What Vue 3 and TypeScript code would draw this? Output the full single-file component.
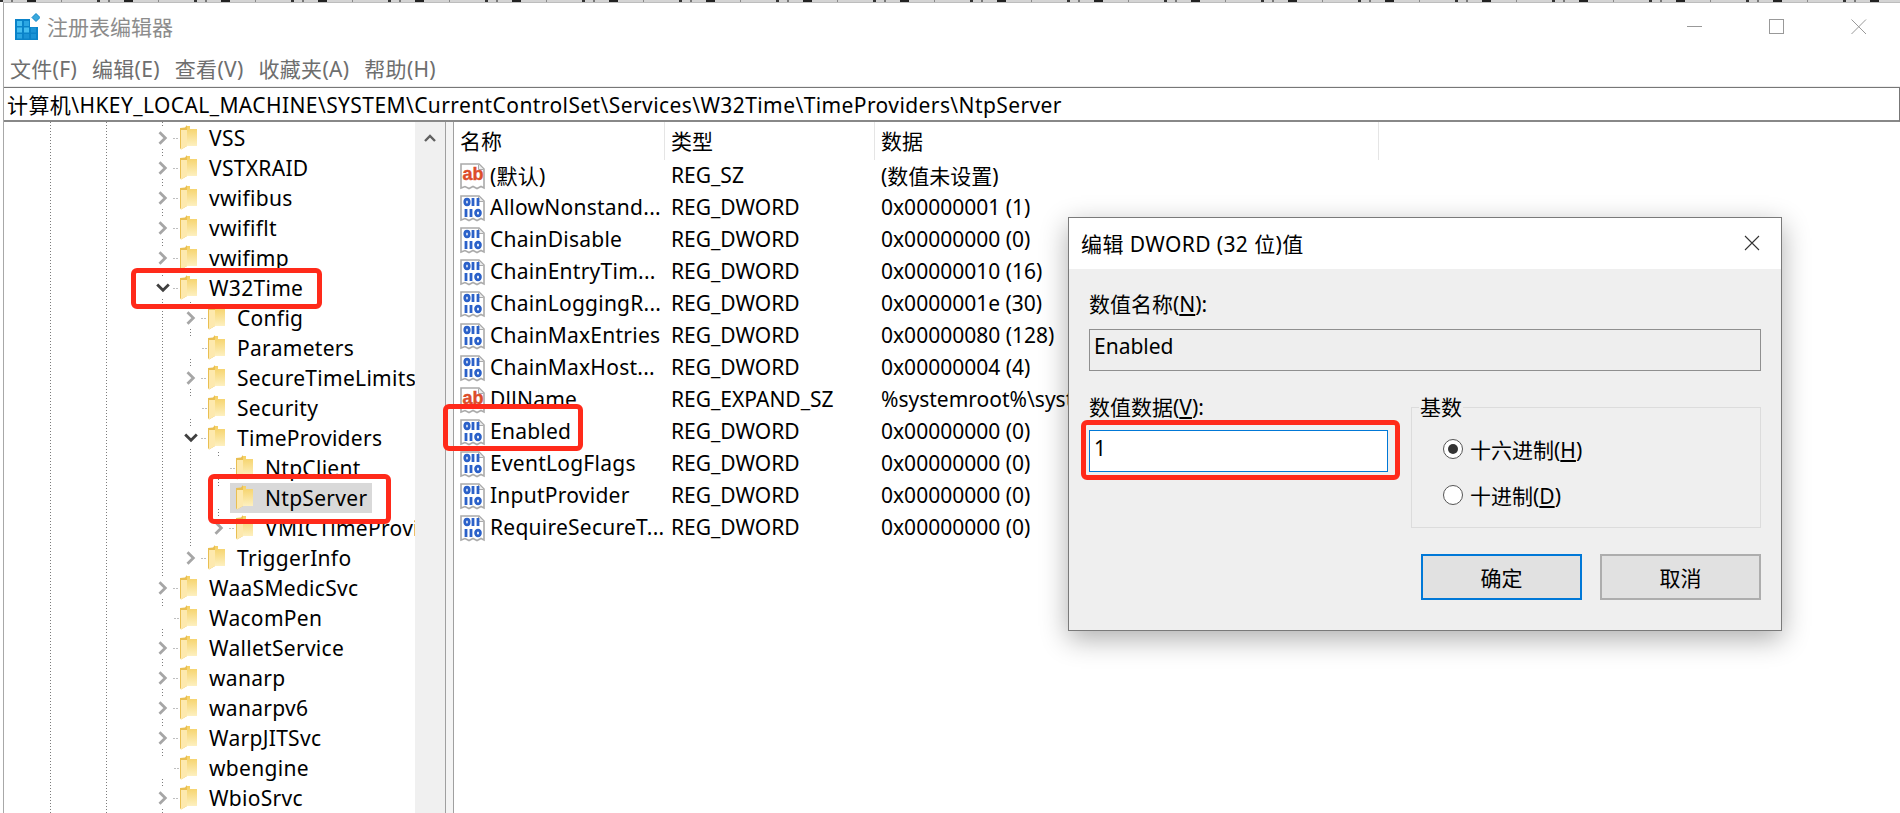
<script setup lang="ts">
type Exp = 'closed' | 'open' | 'none'
interface TreeRow { name: string; level: number; exp: Exp; sel?: boolean }
interface Mark { left: number; top: number; width: number; height: number }

const rowH = 30
const treeRows: TreeRow[] = [
  { name: 'VSS', level: 0, exp: 'closed' },
  { name: 'VSTXRAID', level: 0, exp: 'closed' },
  { name: 'vwifibus', level: 0, exp: 'closed' },
  { name: 'vwififlt', level: 0, exp: 'closed' },
  { name: 'vwifimp', level: 0, exp: 'closed' },
  { name: 'W32Time', level: 0, exp: 'open' },
  { name: 'Config', level: 1, exp: 'closed' },
  { name: 'Parameters', level: 1, exp: 'none' },
  { name: 'SecureTimeLimits', level: 1, exp: 'closed' },
  { name: 'Security', level: 1, exp: 'none' },
  { name: 'TimeProviders', level: 1, exp: 'open' },
  { name: 'NtpClient', level: 2, exp: 'none' },
  { name: 'NtpServer', level: 2, exp: 'none', sel: true },
  { name: 'VMICTimeProvider', level: 2, exp: 'closed' },
  { name: 'TriggerInfo', level: 1, exp: 'closed' },
  { name: 'WaaSMedicSvc', level: 0, exp: 'closed' },
  { name: 'WacomPen', level: 0, exp: 'none' },
  { name: 'WalletService', level: 0, exp: 'closed' },
  { name: 'wanarp', level: 0, exp: 'closed' },
  { name: 'wanarpv6', level: 0, exp: 'closed' },
  { name: 'WarpJITSvc', level: 0, exp: 'closed' },
  { name: 'wbengine', level: 0, exp: 'none' },
  { name: 'WbioSrvc', level: 0, exp: 'closed' },
]

const values = [
  { kind: 'ab', name: '(默认)', type: 'REG_SZ', data: '(数值未设置)' },
  { kind: 'bin', name: 'AllowNonstand...', type: 'REG_DWORD', data: '0x00000001 (1)' },
  { kind: 'bin', name: 'ChainDisable', type: 'REG_DWORD', data: '0x00000000 (0)' },
  { kind: 'bin', name: 'ChainEntryTim...', type: 'REG_DWORD', data: '0x00000010 (16)' },
  { kind: 'bin', name: 'ChainLoggingR...', type: 'REG_DWORD', data: '0x0000001e (30)' },
  { kind: 'bin', name: 'ChainMaxEntries', type: 'REG_DWORD', data: '0x00000080 (128)' },
  { kind: 'bin', name: 'ChainMaxHost...', type: 'REG_DWORD', data: '0x00000004 (4)' },
  { kind: 'ab', name: 'DllName', type: 'REG_EXPAND_SZ', data: '%systemroot%\\system32\\w32time.dll' },
  { kind: 'bin', name: 'Enabled', type: 'REG_DWORD', data: '0x00000000 (0)' },
  { kind: 'bin', name: 'EventLogFlags', type: 'REG_DWORD', data: '0x00000000 (0)' },
  { kind: 'bin', name: 'InputProvider', type: 'REG_DWORD', data: '0x00000000 (0)' },
  { kind: 'bin', name: 'RequireSecureT...', type: 'REG_DWORD', data: '0x00000000 (0)' },
]

const menus = ['文件(F)', '编辑(E)', '查看(V)', '收藏夹(A)', '帮助(H)']

const marks: Mark[] = [
  { left: 131, top: 268, width: 191, height: 41 },
  { left: 208, top: 474, width: 183, height: 50 },
  { left: 443, top: 404, width: 140, height: 47 },
  { left: 1081, top: 420, width: 319, height: 60 },
]

const guideVertical = [
  { x: 46.5, y1: 0, y2: 700 },
  { x: 102.5, y1: 0, y2: 700 },
  { x: 158.5, y1: 0, y2: 700 },
  { x: 186.5, y1: 180, y2: 425 },
  { x: 214.5, y1: 330, y2: 405 },
]

const guideStubs = treeRows.map((r, i) => {
  const x = 158.5 + 28 * r.level
  const y = i * rowH + 16.5
  return { x1: r.exp === 'none' ? x : x + 11, x2: x + 16, y }
})

function rowIndent(level: number): string {
  return `${149 + 28 * level}px`
}
</script>

<template>
  <div class="page">
    <div class="strip"></div>
    <div class="window">
      <header class="titlebar">
        <svg class="app-icon" width="25" height="27" viewBox="0 0 25 27">
          <rect x="0" y="6" width="23" height="21" fill="#0a83c9" />
          <rect x="2" y="8" width="5" height="5" fill="#45bdf0" />
          <rect x="9" y="8" width="5" height="5" fill="#2aa5e2" />
          <rect x="2" y="14.5" width="5" height="5" fill="#45bdf0" />
          <rect x="9" y="14.5" width="5" height="5" fill="#45bdf0" />
          <rect x="16" y="14.5" width="5" height="5" fill="#1a93d6" />
          <rect x="2" y="21" width="5" height="4.5" fill="#2aa5e2" />
          <rect x="9" y="21" width="5" height="4.5" fill="#1a93d6" />
          <rect x="16" y="21" width="5" height="4.5" fill="#1a93d6" />
          <rect x="15" y="6" width="8" height="8" fill="#fff" />
          <path d="M21 .5l4 4-4 4-4-4z" fill="#3aa9dc" stroke="#0a83c9" stroke-width="1" />
        </svg>
        <span class="title-text">注册表编辑器</span>
        <div class="controls">
          <svg width="16" height="16" viewBox="0 0 16 16"><path d="M0 7.5h15" stroke="#999" fill="none" /></svg>
          <svg width="16" height="16" viewBox="0 0 16 16"><rect x=".5" y=".5" width="14" height="14" stroke="#999" fill="none" /></svg>
          <svg width="16" height="16" viewBox="0 0 16 16"><path d="M.5.5l14.5 14.5M15 .5L.5 15" stroke="#999" fill="none" /></svg>
        </div>
      </header>
      <nav class="menu">
        <span v-for="m in menus" :key="m">{{ m }}</span>
      </nav>
      <div class="address">计算机\HKEY_LOCAL_MACHINE\SYSTEM\CurrentControlSet\Services\W32Time\TimeProviders\NtpServer</div>
      <main class="main">
        <section class="tree">
          <div class="tree-scroll">
            <svg class="guides" width="411" height="700">
              <line v-for="g in guideVertical" :key="g.x" :x1="g.x" :x2="g.x" :y1="g.y1" :y2="g.y2" />
              <line v-for="(s, i) in guideStubs" :key="i" :x1="s.x1" :x2="s.x2" :y1="s.y" :y2="s.y" />
            </svg>
            <div v-for="r in treeRows" :key="r.name" class="row" :style="{ paddingLeft: rowIndent(r.level) }">
              <span class="expander">
                <svg v-if="r.exp === 'closed'" width="10" height="14" viewBox="0 0 10 14"><path d="M1.5 1.2l5.8 5.8-5.8 5.8" fill="none" stroke="#a6a6a6" stroke-width="2.8" /></svg>
                <svg v-else-if="r.exp === 'open'" width="14" height="10" viewBox="0 0 14 10"><path d="M1.2 1.5l5.8 5.8 5.8-5.8" fill="none" stroke="#404040" stroke-width="2.8" /></svg>
              </span>
              <span class="item" :class="{ selected: r.sel }">
                <svg class="folder" width="17" height="25" viewBox="0 0 17 25">
                  <defs>
                    <linearGradient id="fback" x1="0" y1="0" x2="0" y2="1">
                      <stop offset="0" stop-color="#f5d062" />
                      <stop offset="1" stop-color="#fdf0c0" />
                    </linearGradient>
                  </defs>
                  <path d="M0 3l5-.5L7 0v21l-6 3.500L0 23z" fill="#e9bf52" />
                  <path d="M7 1h3v3h7v17H7z" fill="url(#fback)" />
                  <path d="M1 5h6v16l-6 3.500z" fill="#fde9ae" />
                </svg>
                <span class="name">{{ r.name }}</span>
              </span>
            </div>
          </div>
          <div class="tree-bar">
            <svg width="12" height="9" viewBox="0 0 12 9"><path d="M1 7l5-5 5 5" fill="none" stroke="#606060" stroke-width="2.4" /></svg>
          </div>
        </section>
        <div class="splitter"></div>
        <section class="list">
          <div class="list-head">
            <span class="col-name">名称</span>
            <span class="col-type">类型</span>
            <span class="col-data">数据</span>
          </div>
          <div v-for="v in values" :key="v.name" class="list-row">
            <span class="col-name cell-name">
              <svg class="reg-icon" width="25" height="27" viewBox="0 0 25 27">
                <path d="M1 1h18l5 5v19l-3-1.500-4 2-4-2-4 2-4-2-4 1.500z" fill="#fff" stroke="#ababab" stroke-width="1.600" />
                <path d="M18.500 1.500v5h5" fill="#eee" stroke="#ababab" />
                <template v-if="v.kind === 'ab'">
                  <text x="2.500" y="17" class="ab">ab</text>
                </template>
                <template v-else>
                  <g fill="none" stroke="#2b61c9" stroke-width="2.800">
                    <ellipse cx="7" cy="7" rx="2.200" ry="2.900" />
                    <path d="M13 3v8M18 3v8" />
                    <path d="M6 14v8M11 14v8" />
                    <ellipse cx="18" cy="18" rx="2.400" ry="2.900" />
                  </g>
                </template>
              </svg>
              <span class="value-name">{{ v.name }}</span>
            </span>
            <span class="col-type">{{ v.type }}</span>
            <span class="col-data">{{ v.data }}</span>
          </div>
        </section>
      </main>
    </div>

    <div class="dialog">
      <div class="dlg-title">
        <span>编辑 DWORD (32 位)值</span>
        <svg width="16" height="16" viewBox="0 0 16 16"><path d="M1 1l14 14M15 1L1 15" stroke="#333" fill="none" stroke-width="1.100" /></svg>
      </div>
      <div class="dlg-body">
        <label class="dlg-label">数值名称(<u>N</u>):</label>
        <div class="field readonly">Enabled</div>
        <div class="dlg-cols">
          <div class="dlg-left">
            <label class="dlg-label">数值数据(<u>V</u>):</label>
            <div class="field active">1</div>
          </div>
          <div class="group">
            <span class="legend">基数</span>
            <div class="radio"><span class="dot checked"></span><span>十六进制(<u>H</u>)</span></div>
            <div class="radio"><span class="dot"></span><span>十进制(<u>D</u>)</span></div>
          </div>
        </div>
        <div class="buttons">
          <button class="btn primary">确定</button>
          <button class="btn">取消</button>
        </div>
      </div>
    </div>

    <div
      v-for="(m, i) in marks"
      :key="i"
      class="mark"
      :style="{ left: m.left + 'px', top: m.top + 'px', width: m.width + 'px', height: m.height + 'px' }"
    ></div>
  </div>
</template>

<style>
html, body { margin: 0; background: #fff; }
</style>

<style scoped>
.page {
  position: relative;
  width: 1900px;
  height: 813px;
  overflow: hidden;
  background: #fff;
  color: #000;
  font-family: "Noto Sans", "Noto Sans CJK SC", sans-serif;
  font-size: 21px;
}
.strip {
  height: 2px;
  background-color: #d4d4d4;
  background-image: repeating-linear-gradient(90deg, #333 0 3px, transparent 3px 11px, #777 11px 13px, transparent 13px 27px, #222 27px 36px, transparent 36px 61px, #888 61px 62px, transparent 62px 97px);
}
.window {
  margin-left: 3px;
  height: 811px;
  display: flex;
  flex-direction: column;
  border-left: 1px solid #a8a8a8;
  border-top: 1px solid #bdbdbd;
  box-sizing: border-box;
}
.titlebar {
  height: 47px;
  display: flex;
  align-items: center;
  padding-left: 11px;
  flex: none;
}
.app-icon { margin-right: 7px; margin-top: -1px; }
.title-text { color: #8c8c8c; margin-top: -2px; }
.controls {
  margin-left: auto;
  display: flex;
  gap: 66px;
  padding-right: 33px;
}
.menu {
  height: 37px;
  display: flex;
  align-items: center;
  gap: 15px;
  padding-left: 6px;
  color: #6e6e6e;
  letter-spacing: 0.3px;
  flex: none;
  border-bottom: 1px solid #ededed;
  box-sizing: border-box;
}
.address {
  height: 35px;
  box-sizing: border-box;
  border-top: 1px solid #777;
  border-bottom: 2px solid #888;
  border-right: 1px solid #777;
  display: flex;
  align-items: center;
  padding-left: 3px;
  letter-spacing: 0.41px;
  flex: none;
}
.main {
  flex: 1;
  display: flex;
  min-height: 0;
}
.tree {
  width: 441px;
  display: flex;
  flex: none;
}
.tree-scroll {
  position: relative;
  width: 411px;
  overflow: hidden;
  padding-top: 1px;
}
.guides {
  position: absolute;
  left: 0;
  top: 0;
}
.guides line {
  stroke: #7c7c7c;
  stroke-width: 1;
  stroke-dasharray: 1 2;
}
.row {
  position: relative;
  height: 30px;
  display: flex;
  align-items: center;
  white-space: nowrap;
}
.expander {
  width: 20px;
  height: 20px;
  display: flex;
  align-items: center;
  justify-content: center;
  background: #fff;
  margin-right: 1px;
  flex: none;
}
.item {
  display: flex;
  align-items: center;
  height: 30px;
  padding-left: 6px;
  padding-right: 5px;
  gap: 12px;
}
.name { letter-spacing: 0.3px; }
.item.selected { background: #d9d9d9; }
.folder { flex: none; margin-bottom: 2px; }
.tree-bar {
  width: 30px;
  background: #f0f0f0;
  flex: none;
  display: flex;
  justify-content: center;
  padding-top: 12px;
  box-sizing: border-box;
}
.tree-bar svg { display: block; }
.splitter {
  width: 7px;
  flex: none;
  border-left: 1px solid #a0a0a0;
  border-right: 1px solid #a0a0a0;
  background: #f4f4f4;
}
.list {
  flex: 1;
  min-width: 0;
  overflow: hidden;
  padding-left: 6px;
}
.list-head {
  height: 38px;
  display: flex;
  align-items: center;
}
.list-head span {
  height: 38px;
  display: flex;
  align-items: center;
  padding-bottom: 2px;
  box-sizing: border-box;
  border-right: 1px solid #e5e5e5;
}
.list-row {
  height: 32px;
  box-sizing: border-box;
  padding-bottom: 2px;
  display: flex;
  align-items: center;
  white-space: nowrap;
}
.col-name { width: 205px; flex: none; }
.col-type { width: 210px; flex: none; padding-left: 6px; box-sizing: border-box; }
.col-data { width: 504px; flex: none; padding-left: 6px; box-sizing: border-box; }
.cell-name { display: flex; align-items: center; gap: 5px; }
.value-name { letter-spacing: 0.25px; }
.reg-icon { flex: none; margin-top: 2px; }
.ab {
  font-family: "Liberation Sans", sans-serif;
  font-weight: 700;
  font-size: 18px;
  fill: #dc4d2a;
  stroke: #dc4d2a;
  stroke-width: 0.4px;
}
.dialog {
  position: absolute;
  left: 1068px;
  top: 217px;
  width: 714px;
  height: 414px;
  box-sizing: border-box;
  background: #efefef;
  border: 1px solid #7a7a7a;
  box-shadow: 0 8px 26px rgba(0, 0, 0, 0.32);
  display: flex;
  flex-direction: column;
}
.dlg-title {
  height: 51px;
  background: #fff;
  display: flex;
  align-items: center;
  justify-content: space-between;
  padding: 0 21px 2px 12px;
  box-sizing: border-box;
  letter-spacing: 0.4px;
  flex: none;
}
.dlg-body {
  padding: 23px 20px 0;
  display: flex;
  flex-direction: column;
}
.dlg-label {
  display: block;
  height: 24px;
  line-height: 24px;
}
.field {
  height: 42px;
  box-sizing: border-box;
  display: flex;
  align-items: center;
  padding: 0 0 6px 4px;
}
.readonly {
  margin-top: 13px;
  padding-bottom: 8px;
  border: 1px solid #8f8f8f;
  background: #eee;
}
.active {
  margin-top: 11px;
  border: 1px solid #0078d7;
  background: #fff;
}
.dlg-cols {
  margin-top: 24px;
  display: flex;
  gap: 23px;
}
.dlg-left { width: 299px; flex: none; }
.group {
  position: relative;
  margin-top: 12px;
  width: 350px;
  height: 121px;
  box-sizing: border-box;
  border: 1px solid #dcdcdc;
  padding: 26px 0 0 31px;
}
.legend {
  position: absolute;
  left: 7px;
  top: -13px;
  background: #efefef;
  padding: 0 1px;
  line-height: 24px;
}
.radio {
  display: flex;
  align-items: center;
  gap: 7px;
  height: 30px;
  margin-bottom: 16px;
}
.dot {
  width: 20px;
  height: 20px;
  box-sizing: border-box;
  border: 1px solid #555;
  border-radius: 50%;
  background: #fff;
  flex: none;
  position: relative;
}
.dot.checked::after {
  content: "";
  position: absolute;
  inset: 4px;
  border-radius: 50%;
  background: #333;
}
.buttons {
  margin-top: 26px;
  display: flex;
  justify-content: flex-end;
  gap: 18px;
}
.btn {
  width: 161px;
  height: 46px;
  box-sizing: border-box;
  background: #e1e1e1;
  border: 2px solid #adadad;
  font: inherit;
  color: #000;
  padding: 0;
}
.btn.primary { border-color: #0078d7; }
.mark {
  position: absolute;
  box-sizing: border-box;
  border: 5px solid #ff2a1a;
  border-radius: 6px;
  pointer-events: none;
}
</style>
